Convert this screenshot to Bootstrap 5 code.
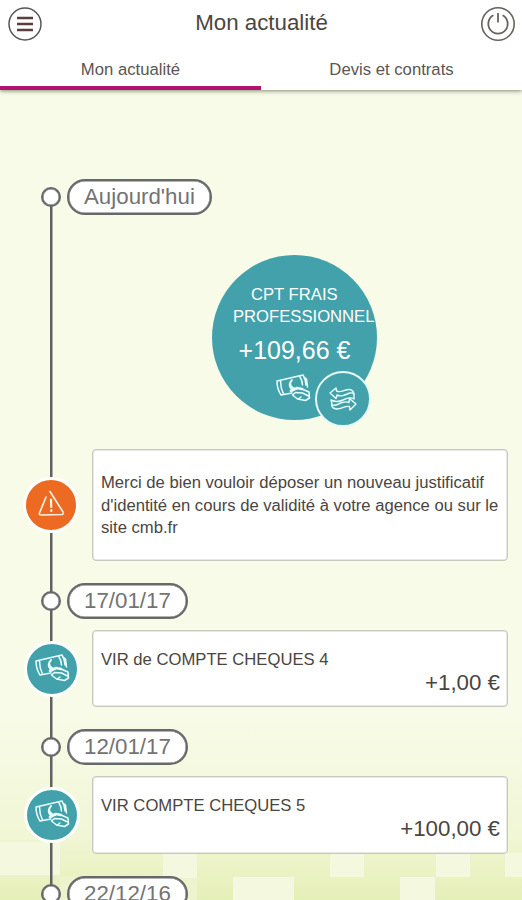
<!DOCTYPE html>
<html lang="fr">
<head>
<meta charset="utf-8">
<meta name="viewport" content="width=device-width, initial-scale=1">
<title>Mon actualité</title>
<link href="https://cdn.jsdelivr.net/npm/bootstrap@5.3.0/dist/css/bootstrap.min.css" rel="stylesheet">
<style>
body{font-family:"Liberation Sans",Arial,sans-serif;color:#4b4540;background:#f7fbe7;height:900px;overflow:hidden}
.app-head{height:90px;box-shadow:0 1px 4px rgba(70,75,50,.65);z-index:3}
.title-row{height:49px;padding:0 6px 2px 7px}
.title-row h1{font-size:22.3px;line-height:1}
.tab-link{height:41px;line-height:41px;border-bottom:4px solid transparent;color:#5b5651;text-decoration:none;font-size:16.7px}
.tab-link.current{border-color:#ad146b}
.feed{height:810px;padding-top:89px}
.scenery{inset:0;z-index:0}
.entries{z-index:1}
.rail,.day,.seg{background:linear-gradient(#606163,#606163) 49.5px 0/2.5px 100% no-repeat}
.rail{width:92px;flex:none;padding-left:23px}
.day{height:36px}
.day .knob{width:20px;height:20px;margin-left:41px;border:2px solid #67686a;box-shadow:inset 0 0 0 .5px #67686a;background:#fff}
.day .pill{height:36px;margin-left:6px;border:2px solid #67686a;box-shadow:inset 0 0 0 .5px #67686a;background:#fff;font-size:22.3px;line-height:31px;color:#737373;padding:0 15px}
.day.first{background-position:49.5px 18px}
.gap-b{height:11px}.gap-a{height:22px}
.hero{height:234px;padding:40px 0 0 120px}
.disc{width:165px;height:165px;background:#42a1aa;color:#fff;text-align:center;padding-top:29px}
.disc .name{font-size:16.65px;line-height:22px;white-space:nowrap}
.disc .name span{display:block;margin-left:21px;text-align:left}
.disc .name span:first-child{margin-left:39px}
.disc .amount{font-size:25px;line-height:30px;margin-top:7px}
.swap{width:56px;height:56px;left:103px;top:116px;border:2px solid #e4f8f5;background:#42a1aa}
.cash{left:63px;top:118px}
.dot-icon{width:56px;height:56px;border:3px solid #fff}
.teal{background:#42a1aa;margin-left:1px}.orange{background:#ec6a22}
.note{width:416px;height:77.4px;background:#fff;border:1px solid #c6c8c1;box-shadow:inset 0 0 0 .5px #d2d4cd;border-radius:4px;padding:18px 7px 0 8px;font-size:16.65px;line-height:22.5px}
.note.tall{height:112px;padding-top:22px;white-space:nowrap}
.note .amount{font-size:22.3px;line-height:22px;text-align:right}
</style>
</head>
<body>
<header class="app-head bg-white position-relative">
  <div class="title-row d-flex align-items-center justify-content-between">
    <svg width="36" height="36" viewBox="0 0 36 36" fill="none" stroke="#555"><circle cx="18" cy="18" r="16" stroke-width="1.5"/><path d="M10 12h16M10 18h16M10 24h16" stroke="#573f40" stroke-width="2.4"/></svg>
    <h1 class="m-0 fw-normal">Mon actualité</h1>
    <svg width="36" height="36" viewBox="0 0 36 36" fill="none" stroke="#66625f" stroke-width="1.6"><circle cx="18" cy="18" r="16.200"/><path d="M13.400 9.300A9.700 9.700 0 1 0 22.600 9.300M18 7v9.500" stroke-width="1.800"/></svg>
  </div>
  <nav class="d-flex text-center">
    <a class="tab-link current w-50">Mon actualité</a>
    <a class="tab-link w-50">Devis et contrats</a>
  </nav>
</header>
<main class="feed position-relative overflow-hidden">
  <svg class="scenery position-absolute" width="522" height="810" viewBox="0 90 522 810">
    <defs>
      <linearGradient id="haze" x1="0" y1="0" x2="0" y2="1"><stop offset="0" stop-color="#f7fbe7"/><stop offset="1" stop-color="#f1f6d5"/></linearGradient>
      <linearGradient id="grass" x1="0" y1="0" x2="0" y2="1"><stop offset="0" stop-color="#eff5d2"/><stop offset=".5" stop-color="#ebf3c5"/><stop offset="1" stop-color="#e5efb8"/></linearGradient>
    </defs>
    <path fill="url(#haze)" d="M0 720h522v122H0z"/>
    <path fill="url(#grass)" d="M0 840h522v60H0z"/>
    <path fill="#f4f8de" d="M0 842h60v33H0zM163 853h34v25h-34zM330 853h34v24h-34zM436 853h34v24h-34zM505 853h17v24h-17zM233 877h61v23h-61zM400 877h35v23h-35z"/>
    <path fill="#edf4cd" d="M60 877h103v23H60zM163 878h34v22h-34z"/>
  </svg>
  <div class="entries position-relative">
    <div class="day first d-flex align-items-center"><span class="knob rounded-circle"></span><span class="pill rounded-pill">Aujourd'hui</span></div>
    <div class="d-flex"><div class="rail"></div>
      <div class="hero"><div class="disc rounded-circle position-relative">
        <div class="name"><span>CPT FRAIS</span><span>PROFESSIONNEL</span></div>
        <div class="amount">+109,66 €</div>
        <svg class="cash position-absolute" width="37" height="32"><use href="#banknote"/></svg>
        <span class="swap position-absolute rounded-circle d-flex align-items-center justify-content-center">
          <svg width="30" height="28" viewBox="0 0 30 28" fill="none" stroke="#e9fffd" stroke-width="1.4" stroke-linejoin="round" stroke-linecap="round"><path d="M2 8l6-5 .5 3c5 2.500 8-2 13-1.500 3 .3 4 2 4.500 4.500-3-2-5-1-8 .5-4 2-7 1.500-9 .5l-1 3.500zM28 19l-6 6-.5-3.500c-5-1-8 3-13 2.500-3-.3-4.500-2-5-4 4 1 5 0 8-1.500 4-2 7-2 9.500-1l.5-4z"/><path d="M4 20c0-3-1-4-1-5 4 2 8 2 12 0s8-3 11-1V9"/></svg>
        </span>
      </div></div>
    </div>
    <div class="d-flex"><div class="rail d-flex align-items-center"><span class="dot-icon orange rounded-circle d-flex align-items-center justify-content-center">
        <svg width="30" height="30" viewBox="0 0 30 30" fill="none" stroke="#fff3e7" stroke-width="1.6" stroke-linecap="round" stroke-linejoin="round"><path d="M10 7L3.500 23Q3 25 5 25L26 24.500Q28 24 27 22L14 1.500"/><path d="M15 9.500l.2 7.500M15.300 20v1" stroke-width="2.200"/></svg>
      </span></div>
      <div class="note tall">Merci de bien vouloir déposer un nouveau justificatif<br>d'identité en cours de validité à votre agence ou sur le<br>site cmb.fr</div>
    </div>
    <div class="seg gap-a"></div>
    <div class="day d-flex align-items-center"><span class="knob rounded-circle"></span><span class="pill rounded-pill">17/01/17</span></div>
    <div class="seg gap-b"></div>
    <div class="d-flex"><div class="rail d-flex align-items-center"><span class="dot-icon teal rounded-circle d-flex align-items-center justify-content-center"><svg width="37" height="32"><use href="#banknote"/></svg></span></div>
      <div class="note"><div>VIR de COMPTE CHEQUES 4</div><div class="amount">+1,00 €</div></div>
    </div>
    <div class="seg gap-a"></div>
    <div class="day d-flex align-items-center"><span class="knob rounded-circle"></span><span class="pill rounded-pill">12/01/17</span></div>
    <div class="seg gap-b"></div>
    <div class="d-flex"><div class="rail d-flex align-items-center"><span class="dot-icon teal rounded-circle d-flex align-items-center justify-content-center"><svg width="37" height="32"><use href="#banknote"/></svg></span></div>
      <div class="note"><div>VIR COMPTE CHEQUES 5</div><div class="amount">+100,00 €</div></div>
    </div>
    <div class="seg gap-a"></div>
    <div class="day d-flex align-items-center"><span class="knob rounded-circle"></span><span class="pill rounded-pill">22/12/16</span></div>
  </div>
</main>
<svg width="0" height="0" class="position-absolute"><defs>
  <symbol id="banknote" viewBox="0 0 37 32"><g fill="none" stroke="#e9fffd" stroke-width="1.500" stroke-linecap="round" stroke-linejoin="round">
    <path d="M2 8L28 2q3 5 3 10M2 8q0 8 4 14l11-2M5.500 8q0 7 3 13M25 4q2.500 4 2.500 8M29 4l2.500 2 1 8"/>
    <path d="M17 7q-4 4 1 8l3 1M15.500 9q-2 4 1 7" stroke-width="1.800"/>
    <path d="M16 18l6-3 5 1" stroke-width="2.600"/>
    <path d="M27 16l7 3 .5 6-4 2.500-8-1.500-5-4 3-2.500 7 .500 6 3M23 26l3-2"/>
  </g></symbol>
</defs></svg>
<script src="https://cdn.jsdelivr.net/npm/bootstrap@5.3.0/dist/js/bootstrap.bundle.min.js"></script>
</body>
</html>
